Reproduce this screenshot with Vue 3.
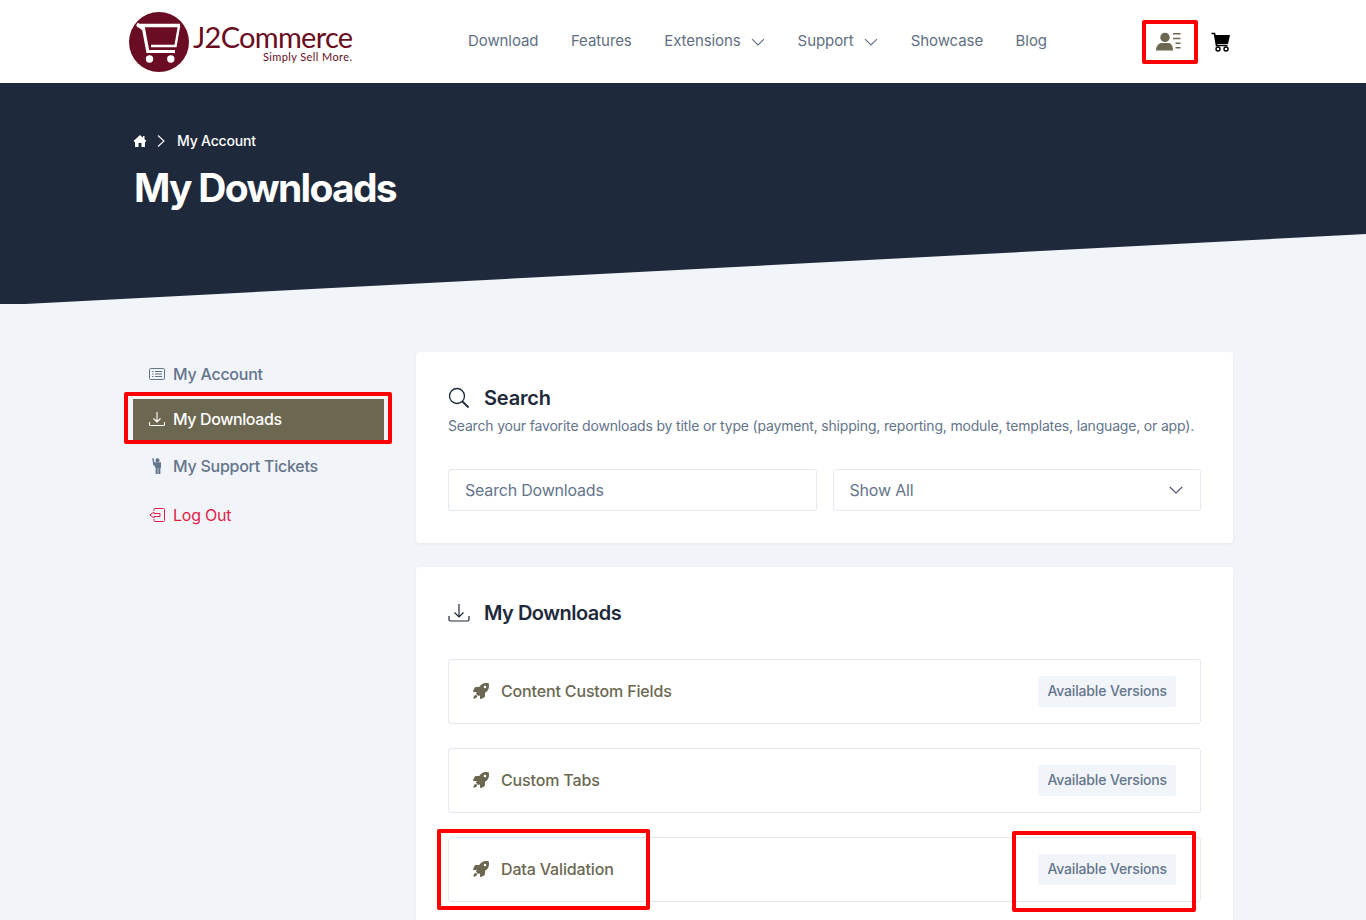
<script setup>
const nav = [
  { label: 'Download' },
  { label: 'Features' },
  { label: 'Extensions', caret: true },
  { label: 'Support', caret: true },
  { label: 'Showcase' },
  { label: 'Blog' },
]
const downloads = ['Content Custom Fields', 'Custom Tabs', 'Data Validation']
</script>

<template>
  <div class="page">
    <header class="topbar">
      <a class="logo">
        <svg class="logo-mark" viewBox="0 0 60 60" width="60" height="60">
          <circle cx="30" cy="30" r="30" fill="#6a0c22" />
          <path d="M8 13.500H51" fill="none" stroke="#fff" stroke-width="3.400" />
          <path d="M8 12l6 5" fill="none" stroke="#fff" stroke-width="3" />
          <path d="M14 14l4.800 25.500H46" fill="none" stroke="#fff" stroke-width="3.200" />
          <path d="M50 14l-3.500 20H22" fill="none" stroke="#fff" stroke-width="2.400" />
          <circle cx="20.500" cy="47" r="3.700" fill="#fff" />
          <circle cx="41.800" cy="47" r="3.700" fill="#fff" />
        </svg>
        <span class="logo-text">
          <span class="logo-name">J2Commerce</span>
          <span class="logo-tag">Simply Sell More.</span>
        </span>
      </a>
      <nav class="nav">
        <a v-for="item in nav" :key="item.label" class="nav-item">
          {{ item.label }}
          <svg v-if="item.caret" width="14" height="14" viewBox="0 0 14 14" class="caret">
            <path d="M1 4.200 7 10l6-5.800" fill="none" stroke="#5f6f83" stroke-width="1.100" />
          </svg>
        </a>
      </nav>
      <div class="tools">
        <svg width="26" height="20" viewBox="0 0 26 20">
          <circle cx="9" cy="5.400" r="4.700" fill="#6b6750" />
          <path d="M0 18.500c0-5 3-7.500 6-7.500h6c3 0 5 2.500 5 7.500z" fill="#6b6750" />
          <path d="M17 1.800h7.500M17 6.500h7.500M19.500 11.200h5M19.500 15.800h5" stroke="#6b6750" stroke-width="1.400" />
        </svg>
        <svg width="20" height="20" viewBox="0 0 20 20">
          <path d="M0.500 1.500h3l2 12h11" fill="none" stroke="#000" stroke-width="1.600" />
          <path d="M3.500 3h15.500l-2 9H5.500z" fill="#000" />
          <circle cx="7" cy="17" r="2" fill="none" stroke="#000" stroke-width="1.400" />
          <circle cx="15" cy="17" r="2" fill="none" stroke="#000" stroke-width="1.400" />
        </svg>
      </div>
    </header>

    <section class="hero">
      <div class="crumbs">
        <svg width="14" height="14" viewBox="0 0 14 14">
          <path d="M7 1 0.500 7l1 1L2 7.600V13h3.500V9h3v4H12V7.600l.5.400 1-1L11.500 5.200V2H10v1.800z" fill="#fff" />
        </svg>
        <svg width="10" height="14" viewBox="0 0 10 14" class="crumb-sep">
          <path d="M2 1.500 8 7l-6 5.500" fill="none" stroke="#fff" stroke-width="1.100" />
        </svg>
        <span>My Account</span>
      </div>
      <h1>My Downloads</h1>
    </section>

    <main class="content">
      <aside class="side">
        <a class="side-item s1">
          <svg width="16" height="12" viewBox="0 0 16 12">
            <rect x=".5" y=".5" width="15" height="11" rx="1" fill="none" stroke="#64748b" />
            <path d="M3 3.500h1.500M6 3.500h7M3 6h1.500M6 6h7M3 8.500h1.500M6 8.500h7" stroke="#64748b" />
          </svg>
          My Account
        </a>
        <a class="side-item active">
          <svg width="16" height="16" viewBox="0 0 16 16">
            <path d="M8 1v10M4.500 7.500 8 11l3.500-3.500M.5 11v2.500q0 1 1 1h13q1 0 1-1V11" fill="none" stroke="#fff" stroke-width="1.100" />
          </svg>
          My Downloads
        </a>
        <a class="side-item s3">
          <svg width="16" height="16" viewBox="0 0 16 16">
            <circle cx="8.500" cy="2.200" r="2" fill="#64748b" />
            <path d="M3.200 .3h1.400l.7 4H12v5.600h-.6V16H9.300v-6H8.700v6H6.600V9.500H6L5.500 7.500H4.400z" fill="#64748b" />
          </svg>
          My Support Tickets
        </a>
        <a class="side-item logout">
          <svg width="16" height="14" viewBox="0 0 16 14">
            <path d="M5 3V1.500q0-1 1-1h8.500q1 0 1 1v11q0 1-1 1H6q-1 0-1-1V11M5 4 .8 7 5 10V8.500h6v-3H5z" fill="none" stroke="#e11d48" stroke-width="1" />
          </svg>
          Log Out
        </a>
      </aside>

      <div class="cards">
        <section class="card search-card">
          <div class="card-head">
            <svg width="22" height="22" viewBox="0 0 22 22">
              <circle cx="9" cy="9" r="7.500" fill="none" stroke="#1e293b" stroke-width="1.300" />
              <path d="m14.500 14.500 6 6" stroke="#1e293b" stroke-width="1.800" />
            </svg>
            <h2>Search</h2>
          </div>
          <p>Search your favorite downloads by title or type (payment, shipping, reporting, module, templates, language, or app).</p>
          <div class="fields">
            <div class="field">Search Downloads</div>
            <div class="field select">
              Show All
              <svg width="14" height="14" viewBox="0 0 14 14">
                <path d="M.8 4 7 10l6.200-6" fill="none" stroke="#475569" stroke-width="1.100" />
              </svg>
            </div>
          </div>
        </section>

        <section class="card list-card">
          <div class="card-head list-head">
            <svg width="22" height="20" viewBox="0 0 22 20">
              <path d="M11 1v13M6.500 9.500 11 14l4.500-4.500" fill="none" stroke="#1e293b" stroke-width="1.200" />
              <path d="M1 13v3.500q0 1.500 1.500 1.500h17q1.500 0 1.500-1.500V13" fill="none" stroke="#1e293b" stroke-width="1.200" />
            </svg>
            <h2>My Downloads</h2>
          </div>
          <div class="rows">
            <div v-for="name in downloads" :key="name" class="row">
              <span class="row-title">
                <svg width="16" height="16" viewBox="0 0 512 512">
                  <path d="M505.120 19.090c-1.190-5.530-6.660-11-12.210-12.190C460.720 0 435.510 0 410.410 0 307.180 0 245.270 55.200 199.050 128H94.840c-16.350.020-35.560 11.880-42.890 26.480L2.520 253.300A28.400 28.400 0 0 0 0 264a24 24 0 0 0 24 24h103.820l-22.480 22.470c-11.360 11.360-13 32.260 0 45.250l50.900 50.910c11.160 11.190 32.160 13.160 45.280 0l22.480-22.470V488a24 24 0 0 0 24 24 28.560 28.560 0 0 0 10.710-2.520l98.730-49.390c14.630-7.300 26.510-26.500 26.510-42.860V312.800c72.600-46.310 128.030-108.410 128.030-211.100.020-25.200.020-50.400-6.950-82.610zM384.040 168a40 40 0 1 1 40.010-40 40 40 0 0 1-40.010 40z" fill="#6b6750" />
                  <path d="M90 375c-40 8-70 50-80 125 70-8 112-36 125-80z" fill="#6b6750" />
                </svg>
                {{ name }}
              </span>
              <span class="badge">Available Versions</span>
            </div>
          </div>
        </section>
      </div>
    </main>

    <div class="mark m-user"></div>
    <div class="mark m-side"></div>
    <div class="mark m-data"></div>
    <div class="mark m-ver"></div>
  </div>
</template>

<style>
html, body { margin: 0; }
</style>

<style scoped>
.page {
  position: relative;
  height: 920px;
  overflow: hidden;
  background: #f1f4f9;
  font-family: Inter, "Liberation Sans", sans-serif;
  color: #64748b;
}
.topbar {
  height: 83px;
  background: #fff;
  display: flex;
  align-items: center;
  padding: 0 135px 0 129px;
}
.logo { display: flex; align-items: center; gap: 4px; width: 339px; }
.logo-mark { flex: none; }
.logo-text { display: flex; flex-direction: column; align-items: flex-end; color: #6a0c22; font-family: Lato, sans-serif; padding-top: 1px; }
.logo-name { font-size: 29px; line-height: 28px; letter-spacing: -.7px; }
.logo-tag { font-size: 11px; line-height: 11px; letter-spacing: .4px; }
.nav { display: flex; gap: 32.5px; margin-top: -2px; }
.nav-item { display: flex; align-items: center; gap: 10.5px; font-size: 15px; color: #5f6f83; letter-spacing: -.08px; }
.caret { margin-top: 2px; }
.tools { margin-left: auto; display: flex; align-items: center; gap: 29px; }
.hero {
  height: 221px;
  box-sizing: border-box;
  background: #1e293b;
  clip-path: polygon(0 0, 100% 0, 100% 151px, 25px 100%, 0 100%);
  padding: 49px 133px 0;
  color: #fff;
}
.crumbs { display: flex; align-items: center; height: 17px; font-size: 14px; font-weight: 500; letter-spacing: -.2px; }
.crumb-sep { margin: 0 11px 0 9px; }
h1 { margin: 12px 0 0 1px; font-size: 39px; line-height: 54px; font-weight: 700; letter-spacing: -1.7px; }
.content { display: flex; padding: 48px 133px 0; gap: 32px; }
.side { width: 251px; flex: none; padding-top: 2px; }
.side-item { display: flex; align-items: center; gap: 8px; padding-left: 16px; height: 40px; font-size: 16px; font-weight: 500; letter-spacing: -.25px; }
.side-item svg { flex: none; }
.active { background: #6b6750; color: #fff; margin-top: 5px; height: 42px; box-sizing: border-box; padding-bottom: 2px; letter-spacing: -.4px; }
.s3 { margin-top: 5px; }
.logout { color: #e11d48; font-weight: 400; margin-top: 9px; }
.cards { flex: 1; display: flex; flex-direction: column; gap: 24px; }
.card { background: #fff; border-radius: 4px; box-shadow: 0 1px 3px rgba(30, 41, 59, .06); padding: 32px; }
.search-card { height: 191px; box-sizing: border-box; }
.card-head { display: flex; align-items: center; gap: 14px; height: 28px; }
.card-head svg { flex: none; }
h2 { margin: 0; font-size: 20px; font-weight: 600; color: #1e293b; letter-spacing: -.2px; }
.list-head h2 { letter-spacing: -.5px; }
.search-card p { margin: 4px 0 0; font-size: 14px; line-height: 20px; letter-spacing: -.18px; white-space: nowrap; }
.fields { display: flex; gap: 16px; margin-top: 33px; }
.field {
  flex: 1;
  height: 42px;
  box-sizing: border-box;
  border: 1px solid #e2e8f0;
  border-radius: 3px;
  display: flex;
  align-items: center;
  justify-content: space-between;
  padding: 0 17px 0 16px;
  font-size: 16px;
  letter-spacing: -.2px;
}
.rows { display: flex; flex-direction: column; gap: 24px; margin-top: 32px; }
.row {
  height: 65px;
  box-sizing: border-box;
  border: 1px solid #e2e8f0;
  border-radius: 3px;
  display: flex;
  align-items: center;
  justify-content: space-between;
  padding: 0 24px;
}
.row-title { display: flex; align-items: center; gap: 12px; font-size: 16px; font-weight: 500; color: #6b6750; letter-spacing: -.15px; line-height: 20px; padding-bottom: 2px; }
.badge { background: #f1f5f9; border-radius: 3px; height: 31px; line-height: 29px; padding: 0 9px; font-size: 14px; font-weight: 500; letter-spacing: -.15px; }
.mark { position: absolute; border: 4px solid #f00; border-radius: 2px; box-sizing: border-box; }
.m-user { left: 1142px; top: 20px; width: 56px; height: 44px; }
.m-side { left: 124px; top: 392px; width: 268px; height: 52px; }
.m-data { left: 437px; top: 829px; width: 213px; height: 81px; }
.m-ver { left: 1012px; top: 831px; width: 184px; height: 81px; }
</style>
